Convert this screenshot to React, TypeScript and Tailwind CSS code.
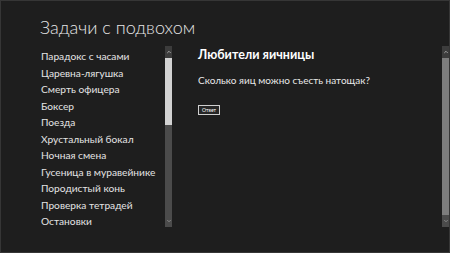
import { ChevronUp, ChevronDown } from "lucide-react";

const puzzles = [
  "Парадокс с часами",
  "Царевна-лягушка",
  "Смерть офицера",
  "Боксер",
  "Поезда",
  "Хрустальный бокал",
  "Ночная смена",
  "Гусеница в муравейнике",
  "Породистый конь",
  "Проверка тетрадей",
  "Остановки",
];

function ScrollBar({ light }: { light: boolean }) {
  return (
    <div className="flex h-[181px] w-[7px] flex-col bg-[#4b4b4b]">
      <div className="flex h-[12px] items-center justify-center bg-[#3c3c3c] text-[#bdbdbd]">
        <ChevronUp size={6} strokeWidth={3} />
      </div>
      {light ? (
        <>
          <div className="h-[67px] bg-[#d2d2d2]" />
          <div className="flex-1" />
        </>
      ) : (
        <div className="flex-1 bg-[#7d7d7d]" />
      )}
      <div className="flex h-[12px] items-center justify-center text-[#9a9a9a]">
        <ChevronDown size={6} strokeWidth={3} />
      </div>
    </div>
  );
}

export default function App() {
  return (
    <div
      className="flex h-[253px] w-[450px] flex-col overflow-hidden border border-[#363636] bg-[#1e1e1e] text-white"
      style={{ fontFamily: 'Lato, "Open Sans", sans-serif' }}
    >
      <h1 className="pl-[39px] pt-[12px] text-[18px] font-light leading-[28px] text-[#e6e6e6]">
        Задачи с подвохом
      </h1>
      <div className="mt-[5px] flex">
        <ul className="w-[164px] shrink-0 pl-[40px] pt-[2px] text-[10.2px] leading-[16.5px] text-[#e4e4e4]">
          {puzzles.map((p) => (
            <li key={p} className="whitespace-nowrap">{p}</li>
          ))}
        </ul>
        <ScrollBar light />
        <div className="flex-1 pl-[26px]">
          <h2 className="text-[12.5px] font-bold leading-[18px]">Любители яичницы</h2>
          <p className="mt-[8px] text-[10px] leading-[16px] text-[#e8e8e8]">Сколько яиц можно съесть натощак?</p>
          <button className="mt-[17px] h-[10px] border border-[#cfcfcf] bg-[#262626] px-[3px] text-[5px] leading-[8px] text-white">
            Ответ
          </button>
        </div>
        <ScrollBar light={false} />
      </div>
    </div>
  );
}
